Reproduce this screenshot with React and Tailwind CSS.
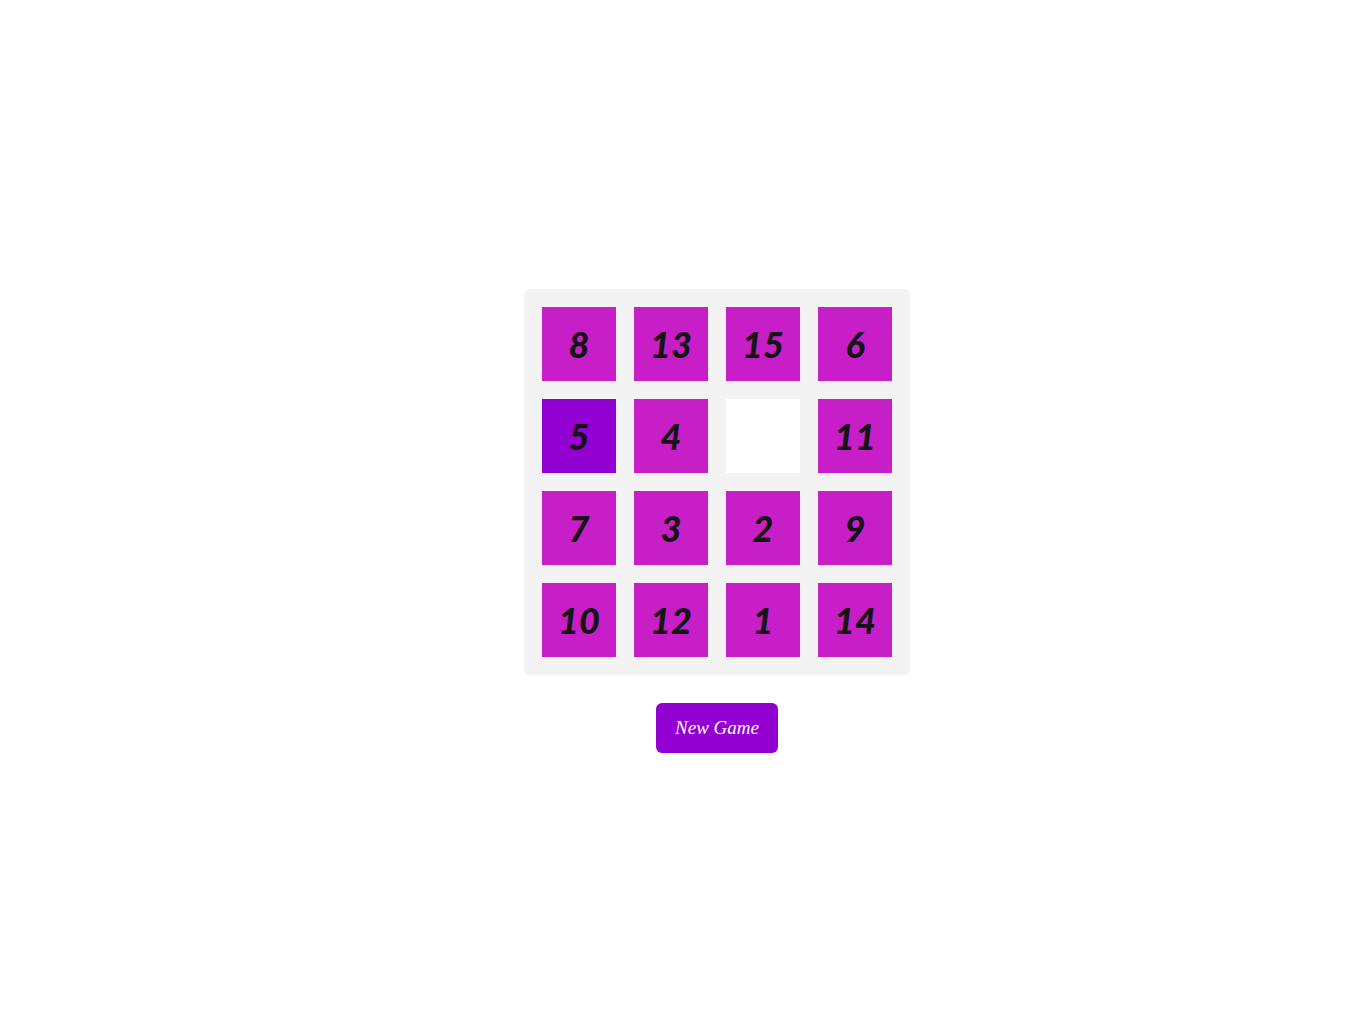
export default function App() {
  const tiles = [8, 13, 15, 6, 5, 4, null, 11, 7, 3, 2, 9, 10, 12, 1, 14];
  return (
    <div className="min-h-[1024px] w-full bg-white flex flex-col items-center pt-[289px] pl-[68px]">
      <div className="grid grid-cols-4 gap-[18px] p-[18px] bg-[#f3f3f3] rounded-[6px] w-[386px]">
        {tiles.map((t, i) =>
          t === null ? (
            <div key={i} className="w-[74px] h-[74px] bg-white" />
          ) : (
            <div
              key={i}
              className={`w-[74px] h-[74px] flex items-center justify-center text-[36px] font-bold italic text-[#141414] ${
                t === 5 ? "bg-[#9300d2]" : "bg-[#c81ec8]"
              }`}
              style={{ fontFamily: "Lato, 'Noto Sans', sans-serif", fontWeight: 900 }}
            >
              {t}
            </div>
          )
        )}
      </div>
      <button
        className="mt-[28px] w-[122px] h-[50px] rounded-[6px] bg-[#9300d2] text-white text-[19px] italic"
        style={{ fontFamily: "'Liberation Serif', serif" }}
      >
        New Game
      </button>
    </div>
  );
}
